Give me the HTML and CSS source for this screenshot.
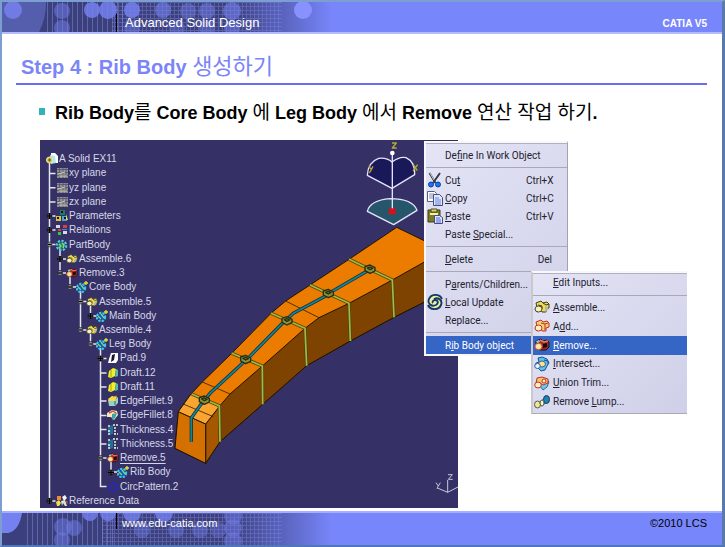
FILE: index.html
```html
<!DOCTYPE html>
<html lang="ko">
<head>
<meta charset="utf-8">
<title>Advanced Solid Design</title>
<link rel="stylesheet" href="styles.css">
</head>
<body>
<svg class="defs" aria-hidden="true">
  <defs>
    <pattern id="mesh" width="4" height="4" patternUnits="userSpaceOnUse"><path d="M0 .5h4M.5 0v4" stroke="#8791e8" stroke-width="1" opacity=".38"/></pattern>
    <pattern id="bars" width="5" height="8" patternUnits="userSpaceOnUse"><path d="M.5 0v8" stroke="#8791e8" opacity=".45"/></pattern>
    <linearGradient id="fade"><stop offset="0" stop-color="#7886fb" stop-opacity="0"/><stop offset="1" stop-color="#7886fb"/></linearGradient>
    <symbol id="i-doc" viewBox="0 0 12 12"><path d="M5 0h4l3 3v7H5z" fill="#fff"/><path d="M4 2l5 1 1 7-5 1z" fill="#aee8f4"/><circle cx="3.5" cy="7" r="3" fill="#d8c04c" stroke="#efe6a0"/><path d="M2 7h3M3.500 5.500v3" stroke="#6b5b12"/></symbol>
    <symbol id="i-plane" viewBox="0 0 12 12"><path d="M1 1h11v10H1z" fill="#8f8f9a"/><path d="M1 2.500h11M1 5.500h11M1 8.500h11M3.500 1v10M7 1v10M10 1v10" stroke="#4e4e63" stroke-width=".7"/><path d="M2 7l7-2M3 9h8" stroke="#d8d0a8"/></symbol>
    <symbol id="i-params" viewBox="0 0 12 12"><path d="M4 0h5v5H4z" fill="#1d7b62"/><path d="M0 6h5v5H0z" fill="#d6c63a"/><path d="M6 6h5v5H6z" fill="#4aa3d6"/><path d="M5 1h2v2H5zM1 7h2v2H1zM8 7h2v2H8z" fill="#111"/><path d="M10 4l2 6h-2z" fill="#e8e060"/></symbol>
    <symbol id="i-rel" viewBox="0 0 12 12"><path d="M0 1h4v3H0zM7 7h4v3H7z" fill="#d8d8e8"/><path d="M7 1h4v3H7z" fill="#e03a3a"/><path d="M2 5h3v2H2z" fill="#e03a3a"/><path d="M2 8h3v3H2z" fill="#27cc3c"/><path d="M6 5h5v1H6z" fill="#4d7ff0"/></symbol>
    <symbol id="i-gear" viewBox="0 0 12 12"><circle cx="5.500" cy="6.500" r="4.600" fill="none" stroke="#49d0d8" stroke-width="2.400" stroke-dasharray="2.200 1.300"/><circle cx="5.500" cy="6.500" r="3.300" fill="#167a8a"/><path d="M3 5l2 2-2 2M6 4l2 2-1 3" stroke="#9be05a" fill="none" stroke-width="1.300"/></symbol>
    <symbol id="i-body" viewBox="0 0 12 12"><circle cx="5" cy="7" r="4" fill="none" stroke="#3fc6e8" stroke-width="2.400" stroke-dasharray="2.200 1.100"/><circle cx="5" cy="7" r="3" fill="#1c4fc0"/><path d="M2 6l3 3M5 4l3 4" stroke="#68e07c" stroke-width="1.400"/><path d="M10 0v4M8 2h4" stroke="#e4e432" stroke-width="1.300"/></symbol>
    <symbol id="i-asm" viewBox="0 0 16 14"><path d="M2 3l5-2 2 2 4-1 2 2v4l-3 1v3H8l-1-2-4 2-2-3 2-2z" fill="#f0dc50" stroke="#3c3a28"/><path d="M9 3l3 2 3-1M4 5l4 1v3" stroke="#3c3a28" fill="none"/><ellipse cx="4.500" cy="9" rx="3.500" ry="3" fill="#f7f2bd" stroke="#4a4833"/><path d="M11 6l3 1v3l-3 2z" fill="#b9b6a0"/></symbol>
    <symbol id="i-add" viewBox="0 0 16 14"><path d="M2 3l5-2 2 2 4-1 2 2v4l-3 1v3H8l-1-2-4 2-2-3 2-2z" fill="#f6d06a" stroke="#c03030"/><path d="M7 4l4 1 3-1M11 5v6" stroke="#c03030" fill="none"/><ellipse cx="4.500" cy="9" rx="3.500" ry="3" fill="#fff4c4" stroke="#c03030"/></symbol>
    <symbol id="i-rem" viewBox="0 0 16 14"><path d="M2 3l5-2 2 2 4-1 2 2v5l-3 3H7l-5-1z" fill="#a32a20" stroke="#2b0c0c"/><path d="M6 2l4 2 4-1" stroke="#f07a5c" stroke-width="1.500" fill="none"/><path d="M9 6l4-1v4l-4 1z" fill="#0e0b0b"/><ellipse cx="4.500" cy="8.500" rx="3.500" ry="3.200" fill="#ffe6a0" stroke="#d0502c"/><path d="M2 3l3-1 1 2-3 1z" fill="#6bd6e8"/></symbol>
    <symbol id="i-int" viewBox="0 0 16 14"><path d="M4 1l4-1 5 2 2 4-2 3-2 4-4 1-3-3-3-2 1-3 3-1z" fill="#5ac3e8" stroke="#1b4e9c"/><ellipse cx="8" cy="7" rx="3.500" ry="3" fill="#ffe27a" stroke="#345fa8"/><ellipse cx="3.500" cy="9" rx="2.800" ry="2.500" fill="#e9f4ff" stroke="#345fa8"/><path d="M10 3l4 1v3" stroke="#1b4e9c" fill="none"/></symbol>
    <symbol id="i-trim" viewBox="0 0 16 14"><path d="M8 5l4-3 3 4-2 5-4 3-3-4z" fill="#65cdec" stroke="#286aa4"/><path d="M3 2l5-1 6 2v4l-5 2-3-2-4 1z" fill="#f7c46c" stroke="#c5302c"/><ellipse cx="4" cy="9" rx="3.300" ry="3" fill="#fff1c0" stroke="#c5302c"/><circle cx="10" cy="5" r="2" fill="#fff1c0" stroke="#c5302c"/></symbol>
    <symbol id="i-lump" viewBox="0 0 16 14"><path d="M5 8l6-5 2 4-6 4z" fill="#e8edf4" stroke="#27476a"/><ellipse cx="12.500" cy="4.500" rx="3" ry="4" fill="#1f82b4" stroke="#123a60"/><ellipse cx="3.500" cy="9.500" rx="3" ry="3.500" fill="#f5e789" stroke="#4a5a5e"/><ellipse cx="8" cy="8" rx="2" ry="3" fill="#fff5ba" stroke="#4a5a5e"/></symbol>
    <symbol id="i-pad" viewBox="0 0 12 12"><path d="M4 1h7v7l-2 3H1l1-4z" fill="#fff"/><path d="M5 3l3-1-1 6-3 2z" fill="#15152c"/></symbol>
    <symbol id="i-draft" viewBox="0 0 12 12"><path d="M2 4l4-3 3 1-1 7-4 2-3-1z" fill="#f2ee28"/><path d="M9 2l2 1v6l-3 1z" fill="#52b9b4"/><path d="M4 3v7" stroke="#a89e16"/></symbol>
    <symbol id="i-fillet" viewBox="0 0 12 12"><path d="M1 5h7l3-3v6l-3 3H2z" fill="#9acfca"/><path d="M1 4l4-3 5 1-2 4H2z" fill="#f0df42"/><path d="M8 6v4" stroke="#27696d"/><path d="M6 2l4-1" stroke="#ee8844"/></symbol>
    <symbol id="i-fillet2" viewBox="0 0 12 12"><path d="M0 4l5-3 5 1 1 4-4 5-3-3H0z" fill="#f3e8bd"/><path d="M5 5l5-1-2 5-3 2z" fill="#35a5a5"/><path d="M2 4l4-2 3 2" stroke="#d9553e" fill="none" stroke-width="1.500"/></symbol>
    <symbol id="i-thick" viewBox="0 0 12 12"><path d="M3 2l3-1v9l-3 1-2-2V3z" fill="#256c9a"/><path d="M2 1v2M2 6v2M1 10h3M6 1h5M8 3v7M7 10h4" stroke="#e6f4da" stroke-width="1.500" stroke-dasharray="2 1"/></symbol>
    <symbol id="i-circ" viewBox="0 0 12 12"><circle cx="6" cy="6" r="4" fill="none" stroke="#2424e8" stroke-width="2.200" stroke-dasharray="2.200 2"/></symbol>
    <symbol id="i-ref" viewBox="0 0 12 12"><path d="M1 1h4v4H1z" fill="#ef8a3c"/><path d="M6 2l3-2 2 3-3 3z" fill="#f3f3f3"/><path d="M0 7l3-2 2 3-2 3H1z" fill="#eee14a"/><path d="M5 6l4-1 2 6H9L7 8l-1 3z" fill="#d9e5d2"/><path d="M9 5l3 2-1 2z" fill="#d84a38"/></symbol>
    <symbol id="i-cut" viewBox="0 0 16 16"><path d="M2.500 1l6 10M13 1L6 11" stroke="#373b46" stroke-width="2" fill="none"/><path d="M3 1l4 7" stroke="#c7cdd8"/><circle cx="4" cy="12.500" r="2.500" fill="#1c74e8" stroke="#0a3db0"/><circle cx="11" cy="12.500" r="2.500" fill="#1c74e8" stroke="#0a3db0"/></symbol>
    <symbol id="i-copy" viewBox="0 0 16 16"><path d="M.5 1.500h7l2 2v8h-9z" fill="#fff" stroke="#5a5f78"/><path d="M2 4h5M2 6h5M2 8h5" stroke="#7e86b0"/><path d="M6.500 4.500h6l3 3v8h-9z" fill="#dfe8ff" stroke="#444a88"/><path d="M8 8h4M8 10h6M8 12h6M8 14h6" stroke="#6a82da"/></symbol>
    <symbol id="i-paste" viewBox="0 0 16 16"><path d="M1 2h12v12H1z" fill="#7c7a22" stroke="#3c3b1d"/><path d="M4 1h6v3H4z" fill="#d9d472" stroke="#4b4a22"/><path d="M3 5h8v2H3z" fill="#f6f1a8"/><path d="M7.500 7.500h5l3 2v6h-8z" fill="#dfe8ff" stroke="#444a88"/><path d="M9 10h4M9 12h5M9 14h5" stroke="#4d64c8"/></symbol>
    <symbol id="i-update" viewBox="0 0 16 16"><circle cx="8" cy="8" r="7.500" fill="#f2f1a2"/><path d="M15 5A7 6.500 0 0 0 2 5c-2 5 3 8 7 6 3-2 2-5-1-5-2 0-3 2-2 3M1 11a7 6.500 0 0 0 13 0c2-5-3-8-7-6" fill="none" stroke="#12396b" stroke-width="1.900"/></symbol>
    <symbol id="node" viewBox="-3 -3 6 6"><circle r="2.600" fill="#8c8c94" stroke="#24242e" stroke-width=".8"/><path d="M-2 0h4" stroke="#000" stroke-width="1.200"/></symbol>
    <symbol id="plus" viewBox="-3 -3 6 6"><circle r="2.600" fill="#55555e" stroke="#181820" stroke-width=".8"/><path d="M-3 0h6M0-3v6" stroke="#000" stroke-width="1.200"/></symbol>
  </defs>
</svg>

<div class="slide">
  <header class="banner">
    <svg class="art" viewBox="0 0 330 32" preserveAspectRatio="xMinYMin slice" aria-hidden="true">
      <rect width="330" height="32" fill="#3b3f7c"/>
      <path d="M0 0h44q0 18-8 32H0z" fill="#555dad"/>
      <rect x="42" width="80" height="32" fill="url(#bars)"/><rect x="110" width="170" height="32" fill="url(#mesh)"/>
      <g fill="#7581ee" opacity=".85"><circle cx="11" cy="8" r="9"/><circle cx="60" cy="9" r="8" opacity=".6"/><circle cx="60" cy="26" r="8" opacity=".6"/><circle cx="90" cy="8" r="8"/><circle cx="106" cy="8" r="9"/><circle cx="130" cy="8" r="8"/><circle cx="161" cy="8" r="8" opacity=".7"/><circle cx="186" cy="9" r="8" opacity=".5"/><circle cx="205" cy="9" r="8" opacity=".6"/><circle cx="230" cy="9" r="9" opacity=".7"/><circle cx="130" cy="26" r="8" opacity=".5"/><circle cx="175" cy="26" r="8" opacity=".4"/><circle cx="205" cy="26" r="8" opacity=".5"/><circle cx="230" cy="26" r="8" opacity=".6"/></g>
      <rect x="230" width="100" height="32" fill="url(#fade)"/><circle cx="301" cy="8" r="9" fill="#8791ff"/>
    </svg>
    <span class="course">Advanced Solid Design</span>
    <span class="product">CATIA V5</span>
  </header>

  <main>
    <h1>Step 4 : Rib Body <span>생성하기</span></h1>
    <ul class="points"><li>Rib Body<span>를</span> Core Body <span>에</span> Leg Body <span>에서</span> Remove <span>연산 작업 하기</span>.</li></ul>

    <div class="figure">
      <div class="viewport">
        <svg class="scene" viewBox="0 0 418 368" role="img" aria-label="Rib Body">
          <g stroke-linejoin="round" transform="translate(125 80) scale(.33333)">
            <path d="M695 22L860 102V205L687 292 556 363 425 437 293 553 165 665 122 730 30 685 40 575 78 522 112 486 200 400 318 280 362 243 435 195 552 118z" fill="#eb7c00" stroke="#201400" stroke-width="3"/>
            <path d="M860 80L682 180 552 250 462 293 420 325 292 438 195 522 165 557 165 665 293 553 425 437 556 363 687 292 860 205z" fill="#7e4300" stroke="#211300" stroke-width="3"/>
            <path d="M165 557L122 612V730L165 665z" fill="#a65700" stroke="#211300" stroke-width="3"/>
            <path d="M40 575L122 612V730L30 685z" fill="#d47000" stroke="#211300" stroke-width="3"/>
            <path d="M78 522L165 557 122 612 40 575z" fill="#f9a52f" stroke="#211300" stroke-width="3"/>
            <path d="M57 553L145 590M112 486L195 522M362 243L462 293" stroke="#342000" stroke-width="2.500"/>
            <g fill="none" stroke="#4b4a0b" stroke-width="10"><path d="M552 118L682 180 687 292M435 195L552 250 556 363M318 280L420 325 425 437M200 400L292 438 293 553M80 522L163 557 165 665"/></g>
            <g fill="none" stroke="#a9b547" stroke-width="5"><path d="M552 118L682 180 687 292M435 195L552 250 556 363M318 280L420 325 425 437M200 400L292 438 293 553M80 522L163 557 165 665"/></g>
            <path d="M612 150L500 215 475 232 385 280 350 312 252 412 135 520 105 557 79 594V665" fill="none" stroke="#15333a" stroke-width="10"/>
            <path d="M612 150L500 215 475 232 385 280 350 312 252 412 135 520 105 557 79 594V665" fill="none" stroke="#15869a" stroke-width="5"/>
            <g fill="#8a9238" stroke="#252b10" stroke-width="4"><path id="hub" d="M600 140l15-5 15 8v10l-15 7-15-8zM607 144l8-3 8 4-8 4z"/><use href="#hub" x="-125" y="73"/><use href="#hub" x="-249" y="155"/><use href="#hub" x="-373" y="271"/><use href="#hub" x="-497" y="393"/></g>
          </g>
          <g transform="translate(310) scale(.33333)" stroke-linejoin="round">
            <path d="M126 145L52 106Q54 66 86 55 110 52 126 66 150 48 168 53 196 66 194 104z" fill="#19195a" stroke="#e7e3ff" stroke-width="4"/>
            <path d="M52 214Q60 181 120 176 188 176 201 211L131 254z" fill="#26566a" stroke="#e7e3ff" stroke-width="4"/>
            <path d="M127 40V212" stroke="#e7e3ff" stroke-width="4"/><circle cx="127" cy="39" r="7" fill="#fff"/><path d="M117 205h19v18h-19z" fill="#e30b1b"/>
            <path d="M126 9h13l-12 15h13M57 79l7 10 5-10M64 89l-6 10M190 74l12 18M203 74l-14 19" fill="none" stroke="#b5a932" stroke-width="4"/>
          </g>
          <g transform="translate(322 325) scale(.33333)" fill="none" stroke="#c9c8dc" stroke-width="3"><path d="M257 82V45M257 82L226 69M257 82L290 65M258 29h13l-12 14h13M222 53l7 10 6-10M229 63l-4 8"/></g>
          <g stroke="#e4e4f0" stroke-width="1.500" fill="none">
            <path d="M9.500 19V361M9.500 33.500h6M9.500 47.700h6M9.500 62h6M9.500 76h6M9.500 90h6M9.500 104.500h6M9.500 361h6M20 108v25M20 119h6M20 133h6M30 133v14h6M40.500 147v43M40.500 161.500h6M40.500 190h6M50.500 161v15h6M50.500 190v14h6M60.500 204V346.500h6M60.500 218.500h6M60.500 233h6M60.500 247h6M60.500 261h6M60.500 275.500h6M60.500 289.500h6M60.500 304h6M60.500 318h6M71 320v12h6"/>
          </g>
          <g>
            <use href="#plus" x="6.500" y="73" width="6" height="6"/><use href="#plus" x="6.500" y="87" width="6" height="6"/><use href="#node" x="6.500" y="101.500" width="6" height="6"/><use href="#plus" x="17" y="116" width="6" height="6"/><use href="#node" x="17" y="130" width="6" height="6"/><use href="#node" x="27" y="144" width="6" height="6"/><use href="#node" x="37.500" y="158.500" width="6" height="6"/><use href="#plus" x="47.500" y="173" width="6" height="6"/><use href="#node" x="37.500" y="187" width="6" height="6"/><use href="#node" x="47.500" y="201" width="6" height="6"/><use href="#plus" x="57.500" y="215.500" width="6" height="6"/><use href="#node" x="57.500" y="315" width="6" height="6"/><use href="#plus" x="68" y="329.500" width="6" height="6"/><use href="#plus" x="6.500" y="358" width="6" height="6"/>
          </g>
        </svg>
        <ul class="tree">
          <li class="d0"><svg><use href="#i-doc"/></svg>A Solid EX11</li>
          <li class="d1"><svg><use href="#i-plane"/></svg>xy plane</li>
          <li class="d1"><svg><use href="#i-plane"/></svg>yz plane</li>
          <li class="d1"><svg><use href="#i-plane"/></svg>zx plane</li>
          <li class="d1"><svg><use href="#i-params"/></svg>Parameters</li>
          <li class="d1"><svg><use href="#i-rel"/></svg>Relations</li>
          <li class="d1"><svg><use href="#i-gear"/></svg>PartBody</li>
          <li class="d2"><svg><use href="#i-asm"/></svg>Assemble.6</li>
          <li class="d2"><svg><use href="#i-rem"/></svg>Remove.3</li>
          <li class="d3"><svg><use href="#i-body"/></svg>Core Body</li>
          <li class="d4"><svg><use href="#i-asm"/></svg>Assemble.5</li>
          <li class="d5"><svg><use href="#i-body"/></svg>Main Body</li>
          <li class="d4"><svg><use href="#i-asm"/></svg>Assemble.4</li>
          <li class="d5"><svg><use href="#i-body"/></svg>Leg Body</li>
          <li class="d6"><svg><use href="#i-pad"/></svg>Pad.9</li>
          <li class="d6"><svg><use href="#i-draft"/></svg>Draft.12</li>
          <li class="d6"><svg><use href="#i-draft"/></svg>Draft.11</li>
          <li class="d6"><svg><use href="#i-fillet"/></svg>EdgeFillet.9</li>
          <li class="d6"><svg><use href="#i-fillet2"/></svg>EdgeFillet.8</li>
          <li class="d6"><svg><use href="#i-thick"/></svg>Thickness.4</li>
          <li class="d6"><svg><use href="#i-thick"/></svg>Thickness.5</li>
          <li class="d6"><svg><use href="#i-rem"/></svg><u>Remove.5</u></li>
          <li class="d7"><svg><use href="#i-body"/></svg>Rib Body</li>
          <li class="d6"><svg><use href="#i-circ"/></svg>CircPattern.2</li>
          <li class="d1"><svg><use href="#i-ref"/></svg>Reference Data</li>
        </ul>
      </div>

      <div class="menu context">
        <button type="button"><i></i><span>De<u>f</u>ine In Work Object</span></button>
        <hr>
        <button type="button"><svg><use href="#i-cut"/></svg><span>Cu<u>t</u></span><kbd>Ctrl+X</kbd></button>
        <button type="button"><svg><use href="#i-copy"/></svg><span><u>C</u>opy</span><kbd>Ctrl+C</kbd></button>
        <button type="button"><svg><use href="#i-paste"/></svg><span><u>P</u>aste</span><kbd>Ctrl+V</kbd></button>
        <button type="button"><i></i><span>Paste <u>S</u>pecial...</span></button>
        <hr>
        <button type="button"><i></i><span><u>D</u>elete</span><kbd>Del</kbd></button>
        <hr>
        <button type="button"><i></i><span>P<u>a</u>rents/Children...</span></button>
        <button type="button"><svg><use href="#i-update"/></svg><span><u>L</u>ocal Update</span></button>
        <button type="button"><i></i><span>Replace...</span></button>
        <hr>
        <button type="button" class="active"><i></i><span>R<u>i</u>b Body object</span></button>
      </div>
      <div class="menu submenu">
        <button type="button"><i></i><span><u>E</u>dit Inputs...</span></button>
        <hr>
        <button type="button"><svg><use href="#i-asm"/></svg><span><u>A</u>ssemble...</span></button>
        <button type="button"><svg><use href="#i-add"/></svg><span>A<u>d</u>d...</span></button>
        <button type="button" class="active"><svg><use href="#i-rem"/></svg><span><u>R</u>emove...</span></button>
        <button type="button"><svg><use href="#i-int"/></svg><span><u>I</u>ntersect...</span></button>
        <button type="button"><svg><use href="#i-trim"/></svg><span><u>U</u>nion Trim...</span></button>
        <button type="button"><svg><use href="#i-lump"/></svg><span>Remove <u>L</u>ump...</span></button>
      </div>
    </div>
  </main>

  <footer class="banner">
    <svg class="art" viewBox="0 0 330 32" preserveAspectRatio="xMinYMin slice" aria-hidden="true">
      <rect width="330" height="32" fill="#3b3f7c"/>
      <path d="M0 0h20q-3 18-14 20H0z" fill="#7581ee"/>
      <rect x="22" width="90" height="32" fill="url(#bars)"/><rect x="100" width="180" height="32" fill="url(#mesh)"/>
      <g fill="#7581ee" opacity=".8"><circle cx="61" cy="14" r="9" opacity=".6"/><circle cx="72" cy="15" r="8" opacity=".6"/><circle cx="60" cy="27" r="8" opacity=".6"/><circle cx="88" cy="0" r="8"/><circle cx="106" cy="0" r="8"/><circle cx="130" cy="0" r="9"/><circle cx="162" cy="0" r="9"/><circle cx="140" cy="17" r="8" opacity=".5"/><circle cx="174" cy="17" r="8" opacity=".5"/><circle cx="198" cy="17" r="8" opacity=".5"/><circle cx="216" cy="17" r="8" opacity=".4"/><circle cx="231" cy="3" r="9" opacity=".6"/><circle cx="231" cy="15" r="9" opacity=".6"/><circle cx="231" cy="28" r="9" opacity=".6"/></g>
      <rect x="230" width="100" height="32" fill="url(#fade)"/>
    </svg>
    <a class="site" href="#">www.edu-catia.com</a>
    <span class="copyright">©2010 LCS</span>
  </footer>
</div>
</body>
</html>
```
FILE: styles.css
```css
* { box-sizing: border-box; }

body {
  margin: 0;
  font-family: "Liberation Sans", "Noto Sans CJK KR", sans-serif;
  color: #000;
}

.defs { position: absolute; width: 0; height: 0; }

.slide {
  display: flex;
  flex-direction: column;
  min-height: 100vh;
  border: 2px solid #7d9ed0;
  border-right: 3px solid #5a7ba8;
  border-bottom-color: #5078b8;
  background: #fff;
}

/* Banners */
.banner {
  position: relative;
  display: flex;
  justify-content: space-between;
  height: 32px;
  padding-right: 15px;
  background: #7886fb;
  border-bottom: 2px solid #b3bcfd;
  overflow: hidden;
}

.art {
  position: absolute;
  inset: 0 auto 0 0;
  width: 330px;
  height: 32px;
}

.course, .site {
  position: relative;
  align-self: flex-end;
  height: 18px;
  margin-left: 114px;
  padding-left: 8px;
  border-left: 1px solid #000;
  color: #fff;
  font-size: 13px;
  line-height: 18px;
}

.product {
  align-self: flex-end;
  color: #fff;
  font-size: 10px;
  font-weight: 700;
  line-height: 16px;
}

footer.banner {
  height: 34px;
  margin-top: auto;
  border-top: 2px solid #a5affd;
  border-bottom: 0;
}

.site {
  align-self: flex-start;
  height: 16px;
  padding-left: 5px;
  font-size: 11px;
  line-height: 20px;
  text-decoration: none;
}

.copyright { font-size: 11px; line-height: 20px; }

/* Content */
main { padding: 17px 15px 0 14px; }

h1 {
  margin: 0;
  padding-left: 5px;
  border-bottom: 2px solid #6a6cf6;
  color: #7b85f7;
  font-size: 20px;
  line-height: 32px;
}

h1 span { font-size: 22px; font-weight: 400; }

.points {
  margin: 12px 0 0;
  padding: 0;
  list-style: none;
  font-size: 18px;
  font-weight: 700;
  line-height: 32px;
}

.points span { font-size: 19px; font-weight: 400; }

.points li::before {
  content: "";
  display: inline-block;
  width: 6px;
  height: 7px;
  margin: 0 10px 4px 23px;
  background: #2fb5b8;
}

.figure { position: relative; margin: 11px 0 0 24px; }

.viewport {
  display: grid;
  width: 100%;
  max-width: 418px;
  background: #353166;
}

.scene { grid-area: 1 / 1; display: block; width: 100%; }

.tree {
  grid-area: 1 / 1;
  display: grid;
  grid-auto-rows: 1fr;
  margin: 0;
  padding: 12px 0 0;
  list-style: none;
  color: #d7d7e8;
  font-size: 10px;
  line-height: 14px;
}

.tree li { display: flex; align-items: center; gap: 1px; min-height: 0; }
.tree svg { width: 12px; height: 12px; }
.tree u { text-underline-offset: 2px; }
.d0 { padding-left: 6px; }
.d1 { padding-left: 16px; }
.d2 { padding-left: 26px; }
.d3 { padding-left: 36px; }
.d4 { padding-left: 46px; }
.d5 { padding-left: 56px; }
.d6 { padding-left: 67px; }
.d7 { padding-left: 77px; }

/* Menus */
.menu {
  position: absolute;
  background: linear-gradient(135deg, #e4e4f6, #cfcfe8);
  border: 2px solid #f7f7fc;
  box-shadow: inset 0 1px #b2b0bc;
}

.context {
  top: 1px;
  left: 384px;
  width: 144px;
  padding-top: 3px;
  border-right: 1px solid #a3a3ae;
}

.submenu {
  top: 131px;
  left: 491px;
  display: grid;
  grid-template-rows: 19px 6px repeat(6, 1fr);
  width: 156px;
  height: 143px;
  padding-bottom: 2px;
  border-right: 0;
  border-left-color: #c9c8cc;
  border-bottom: 1px solid #aaa9b4;
}

.menu button {
  display: flex;
  align-items: center;
  width: 100%;
  height: 18px;
  padding: 0 15px 0 1px;
  border: 0;
  background: none;
  color: #22222e;
  font-family: Roboto, sans-serif;
  font-size: 10px;
  text-align: left;
  white-space: nowrap;
}

.submenu button { height: auto; }
.menu svg, .menu i { flex: none; width: 16px; height: 16px; margin-right: 2px; }
.submenu svg, .submenu i { margin-right: 3px; }
.menu kbd { width: 26px; margin-left: auto; font: inherit; text-align: right; }
.menu .active { background: #3565c5; color: #fff; }

.menu hr {
  height: 7px;
  margin: 0;
  border: 0;
  background: linear-gradient(#a9a8b4, #a9a8b4) center / 100% 1px no-repeat;
}

.submenu hr { height: 6px; }
```
